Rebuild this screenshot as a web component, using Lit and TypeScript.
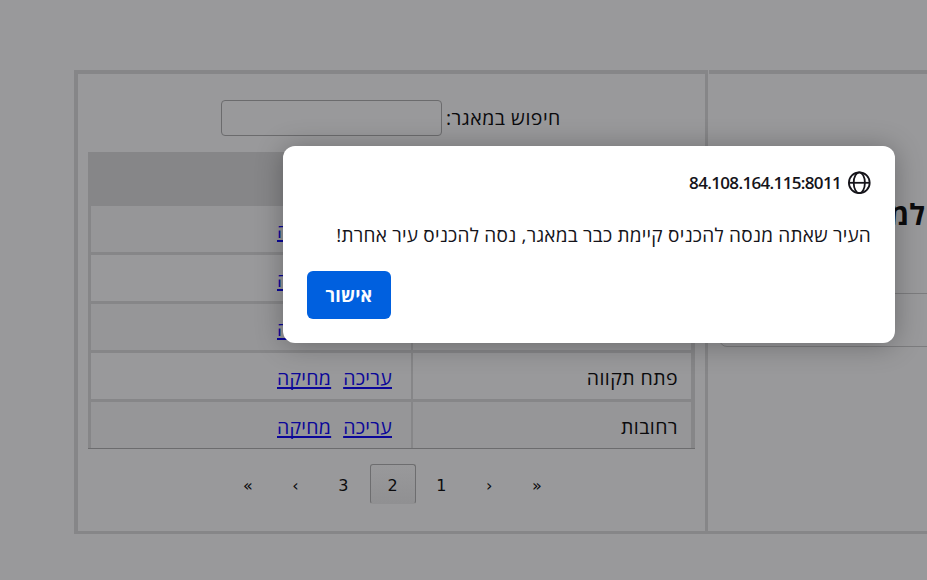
import { LitElement, html, css } from "lit";
import { customElement } from "lit/decorators.js";

@customElement("page-nav")
class PageNav extends LitElement {
  static styles = css`
    :host { display: flex; height: 40px; margin: 15px 0 0 146px; font: 16px "DejaVu Sans", sans-serif; color: #0b0b0d; }
    span { box-sizing: border-box; width: 47.7px; text-align: center; line-height: 43px; }
    .current { width: 46px; margin: 0 2px 0 2.5px; border: 1px solid #6d6d6f; border-bottom-color: #909092; border-radius: 3px; line-height: 41px; background: linear-gradient(#99999b, #909092); }
  `;
  render() {
    return html`<span>«</span><span>‹</span><span>3</span><span class="current">2</span><span>1</span><span>›</span><span>»</span>`;
  }
}

@customElement("city-table")
class CityTable extends LitElement {
  static styles = css`
    :host { display: block; box-sizing: border-box; width: 607px; height: 297px; margin: 16px 0 0 10px; background: #868688; border-bottom: 1px solid #6c6c6e; padding: 54px 4px 0 3px; }
    .row { display: grid; grid-template: 46px / 320px 278px; gap: 2px; height: 46px; margin-bottom: 3px; font: 500 19.5px/49px "Open Sans", "DejaVu Sans", sans-serif; letter-spacing: .25px; }
    .row:last-child { margin: 0; }
    .row > div { background: #99999b; direction: rtl; }
    .row:nth-child(odd) > div { background: #969698; }
    .links { display: flex; gap: 12px; padding-right: 19px; }
    .row > .name { padding-right: 13px; color: #0b0b0d; white-space: nowrap; letter-spacing: .42px; }
    a { color: #0b0799; text-decoration: underline; text-decoration-thickness: 2px; text-underline-offset: 2px; text-decoration-skip-ink: none; white-space: nowrap; }
  `;
  render() {
    return ["", "", "", "פתח תקווה", "רחובות"].map(
      (name) => html`<div class="row"><div class="links"><a>עריכה</a><a>מחיקה</a></div><div class="name">${name}</div></div>`
    );
  }
}

@customElement("alert-dialog")
class AlertDialog extends LitElement {
  static styles = css`
    :host { display: flex; flex-direction: column; box-sizing: border-box; width: 612px; height: 197px; padding: 24px; border-radius: 12px; background: #fff; direction: rtl; color: #15141a; box-shadow: 0 2px 28px rgba(0, 0, 0, .3); font-family: "Open Sans", "DejaVu Sans", sans-serif; }
    header { display: flex; align-items: center; gap: 6px; height: 25px; font-size: 17px; font-weight: 600; }
    .host { letter-spacing: -.66px; }
    svg { width: 24px; height: 24px; flex: none; }
    p { margin: 26px 0 0; height: 28px; line-height: 28px; font-size: 19px; letter-spacing: .22px; white-space: nowrap; }
    button { width: 84px; height: 48px; margin: 22px auto 0 0; padding: 0; border: 0; border-radius: 6px; background: #0060df; color: #fbfbfe; font: 700 18px "Open Sans", "DejaVu Sans", sans-serif; letter-spacing: .2px; }
  `;
  render() {
    return html`
      <header>
        <svg viewBox="0 0 24 24" fill="none" stroke="#15141a" stroke-width="1.8"><circle cx="12.3" cy="11.8" r="10.4" /><ellipse cx="12.3" cy="11.8" rx="5.6" ry="10.4" /><path d="M1.9 11.8h20.8" /></svg>
        <span class="host" dir="ltr">84.108.164.115:8011</span>
      </header>
      <p>העיר שאתה מנסה להכניס קיימת כבר במאגר, נסה להכניס עיר אחרת!</p>
      <button>אישור</button>`;
  }
}

@customElement("app-root")
class AppRoot extends LitElement {
  static styles = css`
    :host { display: block; position: relative; box-sizing: border-box; width: 927px; height: 580px; padding: 70px 0 0 74px; overflow: hidden; background: #99999b; font-family: "Open Sans", "DejaVu Sans", sans-serif; color: #0b0b0d; }
    main { display: flex; box-sizing: border-box; height: 464px; border-bottom: 3px solid #868688; }
    .list { box-sizing: border-box; flex: none; width: 634px; border: solid #868688; border-width: 4px 3px 0 4px; }
    .search { display: flex; align-items: center; height: 36px; margin: 26px 0 0 143px; gap: 4px; font-size: 19.5px; font-weight: 500; letter-spacing: .5px; direction: ltr; }
    .field { box-sizing: border-box; width: 221px; height: 36px; border: 1px solid #6b6b6d; border-radius: 4px; }
    .label { direction: rtl; white-space: nowrap; line-height: 36px; height: 36px; }
    .side { box-sizing: border-box; width: 218px; margin-left: 1px; border-top: 4px solid #868688; overflow: hidden; }
    h1 { margin: 117px 2px 0 0; height: 46px; line-height: 46px; font-size: 29px; direction: rtl; }
    .entry { box-sizing: border-box; width: 240px; height: 54px; margin: 56px 0 0 10px; border: 1px solid #7c7c7e; border-radius: 8px; }
    alert-dialog { position: absolute; left: 283px; top: 146px; }
  `;
  render() {
    return html`
      <main>
        <section class="list">
          <div class="search"><div class="field"></div><span class="label">חיפוש במאגר:</span></div>
          <city-table></city-table>
          <page-nav></page-nav>
        </section>
        <section class="side"><h1>למ</h1><div class="entry"></div></section>
      </main>
      <alert-dialog></alert-dialog>`;
  }
}
